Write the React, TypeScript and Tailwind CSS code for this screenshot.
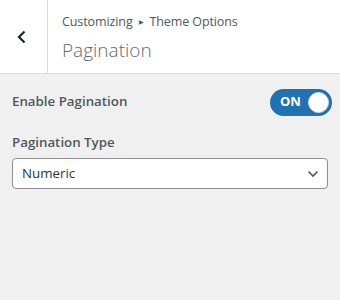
import React from "react";

export default function App() {
  return (
    <div
      className="w-[340px] h-[300px] bg-[#f0f0f1] overflow-hidden"
      style={{ fontFamily: '"Open Sans", "Noto Sans", sans-serif' }}
    >
      <div className="flex h-[74px] bg-white border-b border-[#dcdcde]">
        <div className="w-[48px] flex items-center justify-center border-r border-[#dcdcde]">
          <svg width="12" height="16" viewBox="0 0 12 16" className="ml-[-4px]">
            <path d="M8.5 2.5 L3 8 L8.5 13.5" fill="none" stroke="#1d2327" strokeWidth="2.2" />
          </svg>
        </div>
        <div className="flex flex-col pl-[14px] pt-[12px]">
          <div className="text-[12.5px] leading-[20px] text-[#50575e] flex items-center tracking-[-0.1px]">
            Customizing
            <span className="text-[6px] mx-[6px] text-[#50575e]">▶</span>
            Theme Options
          </div>
          <div className="text-[19px] leading-[28px] font-light text-[#646970] mt-[4px]">
            Pagination
          </div>
        </div>
      </div>
      <div className="px-[12px] pt-[14px]">
        <div className="flex items-center justify-between h-[28px]">
          <span className="text-[13.3px] font-semibold text-[#50575e]">Enable Pagination</span>
          <div className="w-[62px] h-[27px] rounded-full bg-[#2271b1] flex items-center justify-between pl-[10px] pr-[3px] mr-[-4px]">
            <span className="text-[13px] font-bold text-white">ON</span>
            <span className="w-[21px] h-[21px] rounded-full bg-white border border-[#dcdcde]"></span>
          </div>
        </div>
        <div className="mt-[16px] text-[13.3px] font-semibold text-[#50575e] leading-[20px]">
          Pagination Type
        </div>
        <div className="mt-[6px] h-[31px] bg-white border border-[#8c8f94] rounded-[4px] flex items-center justify-between pl-[9px] pr-[8px]">
          <span className="text-[13.3px] text-[#2c3338]">Numeric</span>
          <svg width="12" height="8" viewBox="0 0 12 8">
            <path d="M1.5 1.5 L6 6 L10.5 1.5" fill="none" stroke="#50575e" strokeWidth="1.6" />
          </svg>
        </div>
      </div>
    </div>
  );
}
